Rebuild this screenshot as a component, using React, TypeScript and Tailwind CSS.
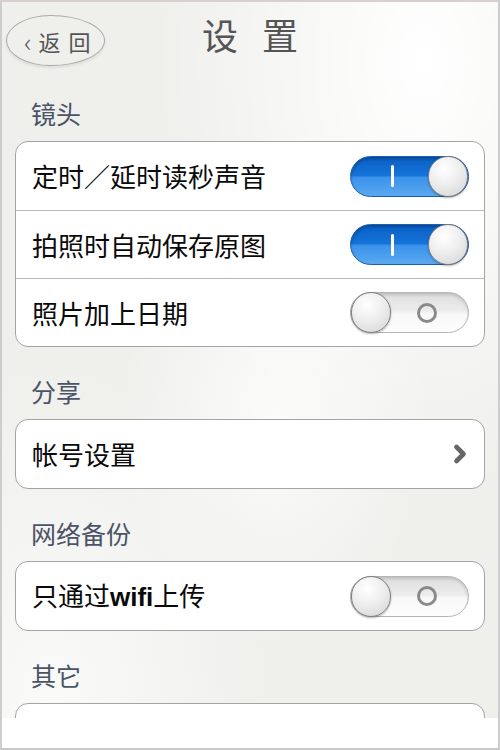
import React from "react";
import { ChevronRight } from "lucide-react";

const font = "font-['Noto_Sans_CJK_SC','Noto_Sans',sans-serif]";

const Toggle: React.FC<{ on: boolean }> = ({ on }) => {
  if (on) {
    return (
      <div className="flex h-[41px] w-[119px] items-center justify-between rounded-full border border-[#1d5fae] bg-[linear-gradient(to_bottom,#0a5fc4_0%,#1574da_48%,#3a92ea_52%,#5aa9f2_100%)] shadow-[inset_0_2px_3px_rgba(0,0,0,0.25)]">
        <div className="flex w-[78px] justify-center pl-[6px]">
          <div className="h-[22px] w-[3px] rounded-sm bg-white" />
        </div>
        <div className="h-[41px] w-[41px] rounded-full border border-[#7d7d7d] bg-[radial-gradient(circle_at_40%_30%,#ffffff_0%,#eeeeee_45%,#d2d2d2_100%)] shadow-[0_1px_2px_rgba(0,0,0,0.3)]" />
      </div>
    );
  }
  return (
    <div className="flex h-[41px] w-[119px] items-center justify-between rounded-full border border-[#b5b5b5] bg-[linear-gradient(to_bottom,#dedede_0%,#ececec_45%,#f8f8f8_55%,#fdfdfd_100%)] shadow-[inset_0_2px_3px_rgba(0,0,0,0.15)]">
      <div className="h-[41px] w-[41px] rounded-full border border-[#7d7d7d] bg-[radial-gradient(circle_at_40%_30%,#ffffff_0%,#eeeeee_45%,#d2d2d2_100%)] shadow-[0_1px_2px_rgba(0,0,0,0.3)]" />
      <div className="flex w-[78px] justify-center pr-[6px]">
        <div className="h-[20px] w-[20px] rounded-full border-[3px] border-[#8a8a8a]" />
      </div>
    </div>
  );
};

const Label: React.FC<{ text: string }> = ({ text }) => (
  <div className="flex h-[72px] items-end pb-[12px] pl-[29px]">
    <span className={`${font} text-[25px] leading-[32px] text-[#4b5467]`}>{text}</span>
  </div>
);

const Row: React.FC<{ first?: boolean; children: React.ReactNode }> = ({ first, children }) => (
  <div
    className={`flex h-[68px] items-center justify-between pl-4 pr-[15px] ${
      first ? "" : "border-t border-[#b8b8b8]"
    }`}
  >
    {children}
  </div>
);

const RowText: React.FC<{ children: React.ReactNode }> = ({ children }) => (
  <span className={`${font} text-[26px] leading-none text-[#0a0a0a]`}>{children}</span>
);

const Card: React.FC<{ children: React.ReactNode }> = ({ children }) => (
  <div className="mx-[13px] overflow-hidden rounded-[13px] border border-[#a4a4a4] bg-white">
    {children}
  </div>
);

export default function App() {
  return (
    <div className="flex h-[750px] w-[500px] flex-col overflow-hidden border-x-2 border-b-2 border-t-2 border-x-[#cdcdcd] border-b-[#c8c8c8] border-t-[#d9cfcf] bg-[#efefec] bg-[image:radial-gradient(ellipse_at_85%_8%,#ffffff_0%,transparent_45%),radial-gradient(ellipse_at_55%_55%,#fbfbfa_0%,transparent_40%),radial-gradient(ellipse_at_10%_95%,#fafaf9_0%,transparent_35%)]">
      <div className="grid h-[67px] shrink-0 grid-cols-[1fr_auto_1fr]">
        <div className="flex items-start pl-[4px] pt-[13px]">
          <div className="flex h-[51px] w-[99px] items-center gap-[7px] rounded-[45%_55%_55%_45%/50%_50%_50%_50%] border border-[#a9a9a9] pl-[17px] shadow-[0_2px_3px_rgba(0,0,0,0.08)]">
            <span className={`${font} text-[26px] font-light leading-none text-[#555]`}>‹</span>
            <span className={`${font} flex gap-[8px] text-[22px] leading-none text-[#555]`}>
              <span>返</span>
              <span>回</span>
            </span>
          </div>
        </div>
        <div className={`${font} flex items-start gap-[24px] pt-[10px] text-[36px] leading-[44px] text-[#555]`}>
          <span>设</span>
          <span>置</span>
        </div>
        <div />
      </div>

      <div className="min-h-0 flex-1 overflow-hidden">
        <Label text="镜头" />
        <Card>
          <Row first>
            <RowText>定时／延时读秒声音</RowText>
            <Toggle on />
          </Row>
          <Row>
            <RowText>拍照时自动保存原图</RowText>
            <Toggle on />
          </Row>
          <Row>
            <RowText>照片加上日期</RowText>
            <Toggle on={false} />
          </Row>
        </Card>

        <Label text="分享" />
        <Card>
          <Row first>
            <RowText>帐号设置</RowText>
            <ChevronRight className="mr-[-5px] h-[28px] w-[28px] text-[#666]" strokeWidth={4} />
          </Row>
        </Card>

        <Label text="网络备份" />
        <Card>
          <Row first>
            <RowText>
              只通过<span className="font-['Liberation_Sans',sans-serif] font-bold">wifi</span>上传
            </RowText>
            <Toggle on={false} />
          </Row>
        </Card>

        <Label text="其它" />
        <Card>
          <div className="h-[68px]" />
        </Card>
      </div>
      <div className="h-[30px] shrink-0 bg-white" />
    </div>
  );
}
